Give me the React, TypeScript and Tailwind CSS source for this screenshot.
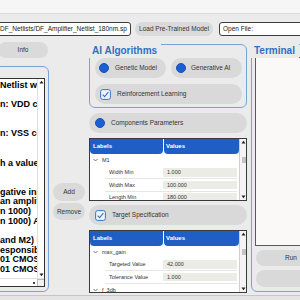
import React from 'react'

const lines = [
  'Netlist with',
  '',
  'n: VDD con',
  '',
  '',
  'n: VSS con',
  '',
  '',
  'h a value',
  '',
  '',
  'gative inpu',
  'an amplif',
  'n 1000)',
  'n 1000) A',
  '',
  'and M2) u',
  'esponsible',
  '01 CMOSN',
  '01 CMOSP',
]

const Radio = () => <div className="w-[10px] h-[10px] shrink-0 rounded-full bg-[#1d5fd0] border border-[#1650b8]" />

const Check = () => (
  <svg width="11" height="11" viewBox="0 0 11 11" className="shrink-0">
    <rect x="0.6" y="0.6" width="9.8" height="9.8" rx="2" fill="#eef3fb" stroke="#3b73c9" strokeWidth="1" />
    <path d="M2.7 5.6 L4.6 7.6 L8.4 3.2" fill="none" stroke="#3b73c9" strokeWidth="1.1" />
  </svg>
)

const Caret = () => (
  <svg width="5" height="4" viewBox="0 0 5 4" className="shrink-0">
    <path d="M0.5 1 L2.5 3 L4.5 1" fill="none" stroke="#555" strokeWidth="0.8" />
  </svg>
)

const Arrow = ({ up }: { up?: boolean }) => (
  <svg width="5" height="4" viewBox="0 0 5 4">
    <path d={up ? 'M0.5 3.5 L2.5 0.8 L4.5 3.5 Z' : 'M0.5 0.5 L2.5 3.2 L4.5 0.5 Z'} fill="#222" />
  </svg>
)

const Pill = ({ children, className }: { children: React.ReactNode; className?: string }) => (
  <div className={'h-[20px] rounded-full bg-[#d9d9d9] flex items-center text-[6.5px] text-[#333] ' + (className || '')}>
    {children}
  </div>
)

const TableScroll = () => (
  <div className="w-[7px] shrink-0 border-l border-[#cfcfcf] bg-[#f4f4f4] flex flex-col items-center justify-between py-[1px]">
    <Arrow up />
    <div className="w-[4px] h-[6px] bg-[#c4c4c4] -mt-[20px] self-end" />
    <Arrow />
  </div>
)

const Tree = ({ parent, rows, after }: { parent: string; rows: [string, string][]; after?: string }) => (
  <div className="h-[63px] shrink-0 border border-[#3a3a3a] bg-white flex overflow-hidden">
    <div className="flex-1 min-w-0 flex flex-col">
      <div className="h-[15px] shrink-0 flex gap-px text-white font-bold text-[6px]">
        <div className="w-[73px] bg-[#1f5fc5] rounded-b-[4px] pl-[3px] flex items-center">Labels</div>
        <div className="flex-1 bg-[#1f5fc5] rounded-b-[4px] pl-[2px] flex items-center">Values</div>
      </div>
      <div className="h-[12.5px] shrink-0 flex items-center pl-[3px] gap-[4px] text-[5.5px] text-[#333]">
        <Caret />
        <span>{parent}</span>
      </div>
      {rows.map(([label, value]) => (
        <div key={label} className="h-[12.5px] shrink-0 ml-[15px] mr-[2px] flex border-b border-[#e6e6e6] text-[5.5px] text-[#333]">
          <div className="w-[58px] pl-[4px] flex items-center">{label}</div>
          <div className="flex-1 my-[1.5px] bg-[#ecece6] pl-[4px] flex items-center">{value}</div>
        </div>
      ))}
      {after && (
        <div className="h-[12.5px] shrink-0 flex items-center pl-[3px] gap-[4px] text-[5.5px] text-[#333]">
          <Caret />
          <span>{after}</span>
        </div>
      )}
    </div>
    <TableScroll />
  </div>
)

const Group = ({ title, className, children }: { title?: string; className?: string; children: React.ReactNode }) => (
  <div className={'relative border border-[#7aa2d8] rounded-[6px] ' + (className || '')}>
    {title && (
      <div className="absolute top-[-2px] left-[-2px] h-[15px] px-[4px] bg-[#ebebeb] text-[10px] font-bold leading-[15px] text-[#2f6fc6]">
        {title}
      </div>
    )}
    {children}
  </div>
)

export default function App() {
  return (
    <div className="w-[300px] h-[300px] overflow-hidden bg-[#ebebeb] flex flex-col font-['Liberation_Sans',Arial,sans-serif] text-[#222]">
      <div className="h-[14px] shrink-0 bg-[#f6f6f6] border-b border-[#dcdcdc]" />

      <div className="flex items-center shrink-0 mt-[8px] h-[14px] text-[6.5px]">
        <div className="ml-[-8px] w-[139px] shrink-0 h-full bg-white border border-[#3d3d3d] rounded-[3px] pl-[7px] leading-[12px] whitespace-nowrap overflow-hidden">
          DF_Netlists/DF_Amplifier_Netlist_180nm.sp
        </div>
        <div className="ml-[4px] w-[78px] shrink-0 h-full rounded-full bg-[#dadada] text-[#333] flex items-center justify-center whitespace-nowrap">
          Load Pre-Trained Model
        </div>
        <div className="ml-[6px] w-[100px] shrink-0 h-full bg-white border border-[#3d3d3d] rounded-[3px] pl-[3px] leading-[12px] whitespace-nowrap">
          Open File:
        </div>
      </div>

      <div className="flex h-[259px] shrink-0">
        {/* left column */}
        <div className="ml-[-10px] w-[59px] shrink-0 flex flex-col">
          <div className="mt-[6px] ml-[8px] w-[50px] h-[16px] rounded-full bg-[#dadada] text-[6.5px] text-[#333] flex items-center justify-center">
            Info
          </div>
          <Group className="mt-[8px] h-[226px] pt-[11px] pr-[3px] pb-[4px] pl-[3px] flex flex-col">
            <div className="flex-1 border border-[#333] bg-white flex flex-col overflow-hidden">
              <div className="flex-1 flex min-h-0">
                <div className="flex-1 min-w-0 overflow-hidden pt-[2px] pl-[5px] font-bold text-[9px] leading-[9.7px] text-black">
                  {lines.map((l, i) => (
                    <div key={i} className="h-[9.7px] whitespace-pre">{l || '\u00a0'}</div>
                  ))}
                </div>
                <div className="w-[7px] shrink-0 border-l border-[#e0e0e0] flex flex-col items-center justify-between py-[1px]">
                  <Arrow up />
                  <Arrow />
                </div>
              </div>
              <div className="h-[8px] shrink-0 flex border-t border-[#e0e0e0]">
                <div className="flex-1 flex items-center justify-end pr-[2px]">
                  <div className="w-[2px] h-[2px] bg-[#444]" />
                </div>
                <div className="w-[7px] border-l border-t border-[#bbb] bg-[#f2f2f2]" />
              </div>
            </div>
          </Group>
        </div>

        {/* add / remove */}
        <div className="ml-[4px] w-[32px] shrink-0 flex flex-col pt-[147px] gap-[2px] text-[6.5px] leading-[8px] text-[#333]">
          <div className="h-[18px] rounded-full bg-[#dadada] flex items-center justify-center">Add</div>
          <div className="h-[17px] rounded-full bg-[#dadada] flex items-center justify-center">Remove</div>
        </div>

        {/* middle column */}
        <div className="ml-[4px] w-[158px] shrink-0 flex flex-col">
          <Group title="AI Algorithms" className="mt-[8px] h-[64px] pt-[13px] pl-[5px] pr-[4px] flex flex-col gap-[6px]">
            <div className="grid grid-cols-2 gap-[5px]">
              <Pill className="pl-[4px] gap-[6px]">
                <Radio />
                Genetic Model
              </Pill>
              <Pill className="pl-[5px] gap-[5px]">
                <Radio />
                Generative AI
              </Pill>
            </div>
            <Pill className="pl-[5px] gap-[6px]">
              <Check />
              Reinforcement Learning
            </Pill>
          </Group>

          <Pill className="mt-[5px] shrink-0 pl-[6px] gap-[6px]">
            <Radio />
            Components Parameters
          </Pill>

          <div className="mt-[5px]">
            <Tree
              parent="M1"
              rows={[
                ['Width Min', '1.000'],
                ['Width Max', '100.000'],
                ['Length Min', '180.000'],
              ]}
            />
          </div>

          <Pill className="mt-[4px] shrink-0 pl-[6px] gap-[6px]">
            <Check />
            Target Specification
          </Pill>

          <div className="mt-[5px]">
            <Tree
              parent="max_gain"
              rows={[
                ['Targeted Value', '42.000'],
                ['Tolerance Value', '1.000'],
              ]}
              after="f_3db"
            />
          </div>
        </div>

        {/* terminal */}
        <div className="ml-[4px] w-[90px] shrink-0 flex flex-col">
          <Group title="Terminal" className="mt-[8px] h-[248px] pt-[12px] pl-[3px] pb-[4px] flex flex-col">
            <div className="h-[189px] shrink-0 bg-[#faf9f7] border border-[#5a5a5a]" />
            <div className="mt-[4px] ml-[1px] w-[70px] h-[16px] rounded-full bg-[#d9d9d9] text-[6.5px] text-[#333] flex items-center justify-center">
              Run
            </div>
            <div className="mt-[4px] ml-[1px] w-[70px] h-[17px] rounded-full bg-[#d9d9d9]" />
          </Group>
        </div>
      </div>

      <div className="h-[5px] shrink-0 border-t border-[#c6c6c6] bg-[#e4e4e4]" />
    </div>
  )
}
